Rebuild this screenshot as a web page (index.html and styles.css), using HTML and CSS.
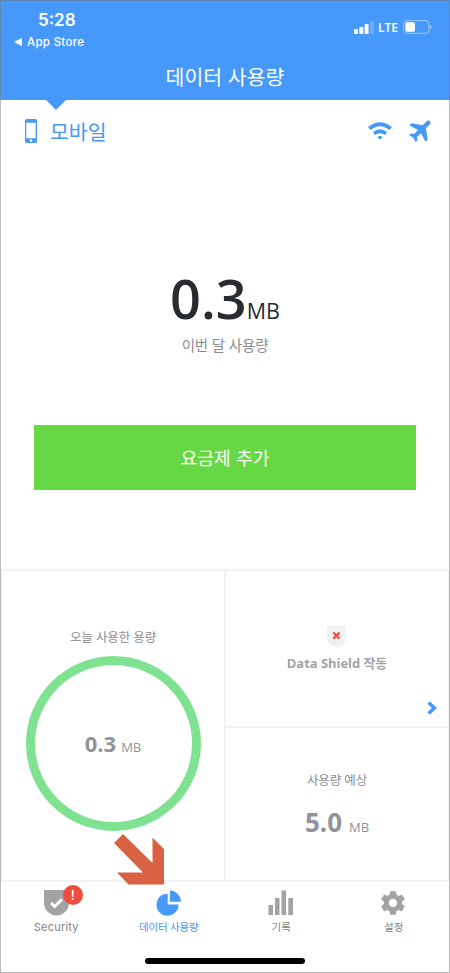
FILE: index.html
```html
<!DOCTYPE html>
<html lang="ko">
<head>
<meta charset="utf-8">
<title>데이터 사용량</title>
<link rel="stylesheet" href="styles.css">
</head>
<body>
<div class="screen">
  <header class="header">
    <div class="status">
      <div class="status-left">
        <div class="time">5:28</div>
        <div class="back"><svg width="8" height="8" viewBox="0 0 8 8"><path d="M0 4 8 0v8z" fill="#fff"/></svg><span>App Store</span></div>
      </div>
      <div class="status-right">
        <svg width="20" height="13" viewBox="0 0 20 13" fill="#fff"><rect x="0" y="8" width="4" height="5" rx="1"/><rect x="5.3" y="6" width="4" height="7" rx="1"/><rect x="10.6" y="3" width="4" height="10" rx="1"/><rect x="16" y="0" width="4" height="13" rx="1" opacity=".2"/></svg>
        <span class="lte">LTE</span>
        <svg width="29" height="14" viewBox="0 0 29 14"><rect x=".6" y=".6" width="25.2" height="12.8" rx="3.5" fill="none" stroke="#fff" stroke-opacity=".4" stroke-width="1.1"/><rect x="2.3" y="2.3" width="9.7" height="9.4" rx="1.6" fill="#fff"/><path d="M27 4.5q3 2.5 0 5z" fill="#fff" opacity=".5"/></svg>
      </div>
    </div>
    <h1 class="title">데이터 사용량</h1>
  </header>

  <nav class="source">
    <svg class="phone" width="12" height="25" viewBox="0 0 12 25"><path fill="#4699f9" fill-rule="evenodd" d="M1.500 0h9A1.500 1.500 0 0 1 12 1.500v21a1.500 1.500 0 0 1-1.500 1.500h-9A1.500 1.500 0 0 1 0 22.500v-21A1.500 1.500 0 0 1 1.500 0zM1.300 3.700v15.600h9.400V3.700zM6 20.300a1.300 1.300 0 1 0 0 2.600a1.300 1.300 0 1 0 0-2.600z"/></svg>
    <span class="source-name">모바일</span>
    <svg class="wifi" width="24" height="18" viewBox="0 0 24 18"><g fill="none" stroke="#4699f9" stroke-width="3.800"><path d="M1.300 6.600Q12-2 22.700 6.600"/><path d="M6 11.500Q12 7 18 11.500"/></g><path d="M9.500 14.800Q12 13 14.500 14.800Q14 16.500 12 17.500Q10 16.500 9.500 14.800z" fill="#4699f9"/></svg>
    <svg class="plane" width="22" height="22" viewBox="0 0 22 22"><path fill="#4699f9" stroke="#4699f9" stroke-width="1.200" stroke-linejoin="round" d="M20.300 1.300c-.8-.5-1.900-.1-2.800.8L13.800 5.800 2.700 3.800 1.300 5.200l8.500 4.600-4.300 4.800-3.500-.5L1 15.100l3.700 2.200 2.100 3.800 1-1-.3-3.500 4.700-4.400 4.400 8.600 1.500-1.500-1.900-11.100 3.700-3.700c.9-.9 1.100-2.400.4-3.200z"/></svg>
    <i class="notch"></i>
  </nav>

  <main class="hero">
    <div class="total"><b>0.3</b><span>MB</span></div>
    <div class="total-label">이번 달 사용량</div>
    <div class="add">요금제 추가</div>
  </main>

  <section class="cards">
    <div class="card today">
      <div class="today-label">오늘 사용한 용량</div>
      <div class="ring"><b>0.3</b><span>MB</span></div>
      <svg class="arrow" width="51" height="51" viewBox="0 0 51 51"><path d="M0 9 9 0 38.500 29V3.500L50 15V50.500H14.500L3 38.500H29z" fill="#d86243"/></svg>
    </div>
    <div class="card shield">
      <svg width="19" height="21" viewBox="0 0 19 21"><path d="M0 0h19v11.500a9.500 9.500 0 0 1-19 0z" fill="#eff1f3"/><path d="m6.300 6.500 6.200 6.200m0-6.200-6.200 6.200" stroke="#eb4f3d" stroke-width="2.300" fill="none"/></svg>
      <div class="shield-label">Data Shield 작동</div>
      <svg class="chevron" width="10" height="14" viewBox="0 0 10 14"><path d="m1.500 1.500 5.900 5.500-5.900 5.500" fill="none" stroke="#4699f9" stroke-width="3.500"/></svg>
    </div>
    <div class="card forecast">
      <div class="forecast-label">사용량 예상</div>
      <div class="forecast-value"><b>5.0</b><span>MB</span></div>
    </div>
  </section>

  <footer class="tabs">
    <div class="tab security">
      <div class="icon"><svg width="25" height="26" viewBox="0 0 25 26"><path d="M0 0h25v13a12.500 12.500 0 0 1-25 0z" fill="#a2a3a5"/><path d="m7 13 3.700 3.600 7.300-7.300" fill="none" stroke="#fff" stroke-width="2.800"/></svg><em class="badge">!</em></div>
      <span>Security</span>
    </div>
    <div class="tab active">
      <div class="icon"><svg width="25" height="26" viewBox="0 0 25 26"><path d="M11.700 3.700v10.700H22.500A11 11 0 1 1 11.700 3.700z" fill="#4699f9"/><path d="M13.900.5A11.500 11.500 0 0 1 25 11.800H13.900z" fill="#4699f9"/></svg></div>
      <span>데이터 사용량</span>
    </div>
    <div class="tab">
      <div class="icon"><svg width="25" height="26" viewBox="0 0 25 26" fill="#a2a3a5"><path d="M-.5 15H4v10H-.5zM6 8H10.500v17H6zM12.500.5H17V25H12.500zM19.300 8H24v17H19.300z"/></svg></div>
      <span>기록</span>
    </div>
    <div class="tab">
      <div class="icon"><svg width="25" height="26" viewBox="0 0 25 26"><path transform="translate(-2.400 -1.200) scale(1.200 1.180)" fill="#a2a3a5" d="M19.430 12.980c.04-.32.070-.64.070-.98s-.030-.66-.070-.98l2.110-1.650c.19-.15.240-.42.120-.64l-2-3.460c-.12-.22-.39-.3-.61-.22l-2.490 1c-.52-.4-1.080-.73-1.690-.98l-.38-2.650C14.460 2.180 14.250 2 14 2h-4c-.25 0-.46.180-.49.420l-.38 2.650c-.61.250-1.170.590-1.690.980l-2.490-1c-.23-.090-.49 0-.61.220l-2 3.460c-.13.220-.07.490.12.640l2.110 1.650c-.04.320-.07.650-.07.980s.03.660.07.980l-2.110 1.650c-.19.150-.24.420-.12.640l2 3.460c.12.220.39.300.61.220l2.490-1c.52.400 1.080.730 1.690.980l.38 2.650c.03.240.24.420.49.420h4c.25 0 .46-.18.49-.42l.38-2.650c.61-.25 1.170-.59 1.690-.98l2.490 1c.23.090.49 0 .61-.22l2-3.460c.12-.22.07-.49-.12-.64zM12 15.500c-1.930 0-3.500-1.570-3.500-3.500s1.570-3.500 3.500-3.500 3.500 1.570 3.500 3.500-1.570 3.500-3.500 3.500z"/></svg></div>
      <span>설정</span>
    </div>
    <i class="home"></i>
  </footer>
</div>
</body>
</html>
```
FILE: styles.css
```css
* { box-sizing: border-box; margin: 0; padding: 0; }
body { background: #fff; font-family: "Open Sans", "Noto Sans CJK KR", sans-serif; }
svg { display: block; flex: none; overflow: visible; }
i, em { font-style: normal; }
.screen { position: relative; width: 450px; height: 973px; display: flex; flex-direction: column; overflow: hidden; white-space: nowrap; }
.screen::after { content: ""; position: absolute; inset: 0; border: 1px solid rgba(120, 120, 120, .5); pointer-events: none; }

.header { height: 100px; background: #4699f9; color: #fff; }
.status { height: 54px; display: flex; justify-content: space-between; font-family: Inter, sans-serif; }
.status-left { padding: 10px 0 0 14px; }
.time { padding-left: 24px; font-size: 17px; font-weight: 600; line-height: 21px; }
.back { display: flex; align-items: center; gap: 5px; height: 22px; font-size: 11.500px; font-weight: 500; letter-spacing: .3px; }
.status-right { display: flex; align-items: center; height: 14px; margin: 20px 18px 0 0; }
.lte { font-family: "Open Sans", sans-serif; font-size: 12px; font-weight: 600; margin: 1px 5px 0 4px; line-height: 14px; }
.title { font: 400 20.500px/44px "Noto Sans CJK KR", sans-serif; text-align: center; }

.source { position: relative; height: 63px; display: flex; align-items: center; padding: 0 19px 0 25px; color: #4699f9; }
.source-name { margin: 0 0 2px 13px; font: 400 20.500px/30px "Noto Sans CJK KR", sans-serif; }
.wifi { margin-left: auto; margin-top: -2px; }
.plane { margin-left: 17px; margin-top: -1px; }
.notch { position: absolute; left: 46px; top: 0; border: solid transparent; border-width: 10px 10px 0; border-top-color: #4699f9; }

.hero { height: 406px; padding-top: 97px; text-align: center; }
.total { height: 76px; line-height: 76px; color: #282c30; }
.total b { font-size: 54px; font-weight: 600; }
.total span { font-size: 21.500px; margin-left: 0; }
.total-label { height: 20px; line-height: 18px; font-size: 14.500px; letter-spacing: -.2px; color: #8b8c8f; font-family: "Noto Sans CJK KR", sans-serif; }
.add { width: 382px; height: 65px; margin: 69px auto 0; background: #65d843; color: #fff; font: 400 18.300px/64px "Noto Sans CJK KR", sans-serif; }

.cards { height: 313px; margin: 0 1px; padding: 2px 1px; display: grid; grid-template-columns: 222px 222px; grid-template-rows: 155px 152px; gap: 2px; background: #f1f2f4; }
.card { background: #fff; display: flex; flex-direction: column; align-items: center; position: relative; }
.today { grid-row: 1 / 3; padding-top: 55px; }
.today-label, .forecast-label { height: 20px; font: 400 12.500px/21px "Noto Sans CJK KR", sans-serif; letter-spacing: -.15px; color: #8b8c8f; }
.ring { width: 175px; height: 175px; margin-top: 10px; border: 9px solid #7fe290; border-radius: 50%; display: flex; align-items: baseline; justify-content: center; line-height: 156px; color: #909399; }
.ring b { font-size: 22px; }
.ring span { font-size: 13px; margin-left: 5px; }
.arrow { position: absolute; left: 112px; top: 263px; z-index: 2; }
.shield { padding-top: 55px; }
.shield > svg:first-child { margin-right: 1px; }
.shield-label { margin-top: 6px; line-height: 20px; font-size: 12.900px; font-weight: 700; color: #a1a3a6; }
.chevron { position: absolute; right: 11px; bottom: 11px; }
.forecast { padding-top: 41px; }
.forecast-value { height: 40px; margin-top: 13px; line-height: 40px; color: #909399; }
.forecast-value b { font-size: 26px; }
.forecast-value span { font-size: 13px; margin-left: 7px; }

.tabs { position: relative; height: 91px; padding-top: 8px; display: flex; }
.tab { width: 112.500px; display: flex; flex-direction: column; align-items: center; color: #828386; font: 400 10.500px/18px "Noto Sans CJK KR", sans-serif; }
.tab .icon { position: relative; height: 28px; }
.security span { font-family: Inter, sans-serif; font-size: 11px; letter-spacing: .2px; }
.active { color: #4699f9; }
.active span { letter-spacing: -.2px; }
.badge { position: absolute; left: 19px; top: -5px; width: 20px; height: 20px; border-radius: 50%; background: #ed4b3c; color: #fff; font: 500 13px/20px Inter, sans-serif; text-align: center; }
.home { position: absolute; left: 145px; bottom: 9px; width: 160px; height: 6px; border-radius: 3px; background: #000; }
```
